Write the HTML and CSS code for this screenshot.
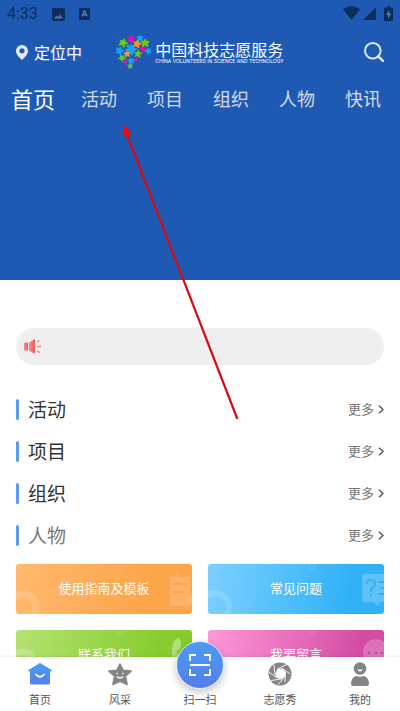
FILE: index.html
```html
<!DOCTYPE html>
<html lang="zh-CN">
<head>
<meta charset="utf-8">
<meta name="viewport" content="width=device-width, initial-scale=1">
<title>中国科技志愿服务</title>
<link rel="stylesheet" href="styles.css">
</head>
<body>
<div class="app">
  <main class="content">
    <header class="hero">
      <div class="status">
        <span class="clock">4:33</span>
        <svg width="13" height="13" viewBox="0 0 13 13"><rect width="13" height="13" rx="1.500" fill="#0f2d5a"/><path fill="#4b79bf" d="M2 10.500h9L8 6.500 6 9 4.500 7.500z"/></svg>
        <svg width="11" height="12" viewBox="0 0 11 12"><rect width="11" height="12" rx="1" fill="#0f2d5a"/><path d="M3 8.500 5.200 3h.6L8 8.500M3.800 6.800h3.400" fill="none" stroke="#5b87c8" stroke-width="1.200"/></svg>
        <span class="signals">
          <svg width="17" height="14" viewBox="0 0 17 14"><path fill="#0f2d5a" d="M0 3.500Q8.500-3 17 3.500L8.500 14z"/></svg>
          <svg width="13" height="13" viewBox="0 0 13 13"><path fill="#0f2d5a" d="M13 0v13H0z"/></svg>
          <svg class="battery" width="9" height="15" viewBox="0 0 9 15"><path fill="#0f2d5a" d="M3 0h3v1.500h2q1 0 1 1V14q0 1-1 1H1q-1 0-1-1V2.500q0-1 1-1h2z"/><path fill="#4b79bf" d="M5.200 4 2 9h2v4l3.200-5.500h-2z"/></svg>
        </span>
      </div>
      <div class="topbar">
        <button class="locate" type="button">
          <svg width="12" height="15" viewBox="0 0 12 15"><path fill="#e3ebf7" fill-rule="evenodd" d="M6 0a6 6 0 0 1 6 6c0 3.500-3.500 6.500-6 9-2.500-2.500-6-5.500-6-9a6 6 0 0 1 6-6zm0 3.200a2.600 2.600 0 1 0 0 5.200 2.600 2.600 0 0 0 0-5.200z"/></svg>
          定位中
        </button>
        <a class="brand" href="#">
          <svg width="36" height="35" viewBox="0 0 36 35">
            <defs><path id="bird" d="M-4.500-2Q-2-1.800-1.500-2.500L0-5Q1.500-3 2-2L5-2.200Q4 0 2.300 1.200L3.500 4.200Q0 3.500-.8 2.500L-4 4.200Q-3.200 1.500-2.500.7z"/></defs>
            <g fill="#f409a5"><use href="#bird" transform="translate(15 4) scale(.9)"/><use href="#bird" transform="translate(27 14) rotate(50) scale(.75)"/><use href="#bird" transform="translate(9 27) rotate(10) scale(.6)"/><use href="#bird" transform="translate(20 25) rotate(80) scale(.5)"/></g>
            <g fill="#72c51b"><use href="#bird" transform="translate(7 8) rotate(20)"/><use href="#bird" transform="translate(29 8) rotate(70)"/><use href="#bird" transform="translate(22 19) rotate(5) scale(.85)"/><use href="#bird" transform="translate(6 23) rotate(35) scale(.8)"/><use href="#bird" transform="translate(14 31) rotate(60) scale(.65)"/></g>
            <g fill="#14a4f6"><use href="#bird" transform="translate(24 3) rotate(60) scale(.75)"/><path d="M8.500 14.500Q13.500 13.500 15.500 8.500 17 13 22 14 17.500 16 16.500 21 13.500 17 8.500 14.500z"/><circle cx="12" cy="11" r="1.600"/><use href="#bird" transform="translate(3.500 16) rotate(15) scale(.95)"/><use href="#bird" transform="translate(32.500 16) rotate(45) scale(.75)"/><use href="#bird" transform="translate(15 26) rotate(60) scale(.8)"/></g>
            <g fill="#f7942b"><use href="#bird" transform="translate(21 9) rotate(10) scale(.95)"/><use href="#bird" transform="translate(11 19) rotate(60) scale(.75)"/></g>
          </svg>
          <span class="brand-text"><span class="brand-cn">中国科技志愿服务</span><span class="brand-en">CHINA VOLUNTEERS IN SCIENCE AND TECHNOLOGY</span></span>
        </a>
        <button class="search" type="button" aria-label="搜索">
          <svg width="20" height="20" viewBox="0 0 20 20" fill="none" stroke="#dfe8f5" stroke-width="2"><circle cx="8.800" cy="8.800" r="7.800"/><path d="m14.300 14.300 4.700 4.500" stroke-width="2.400" stroke-linecap="round"/></svg>
        </button>
      </div>
      <nav class="tabs">
        <a class="tab active" href="#">首页</a>
        <a class="tab" href="#">活动</a>
        <a class="tab" href="#">项目</a>
        <a class="tab" href="#">组织</a>
        <a class="tab" href="#">人物</a>
        <a class="tab" href="#">快讯</a>
      </nav>
    </header>

    <div class="notice">
      <svg width="18" height="15" viewBox="0 0 18 15"><defs><linearGradient id="horn"><stop stop-color="#fa8e8c"/><stop offset="1" stop-color="#f8585b"/></linearGradient></defs><path fill="url(#horn)" d="M1 3.500h3v8H1q-1 0-1-1v-6q0-1 1-1z"/><path fill="url(#horn)" d="M5 3.500 10 .5q1-.5 1 .5v13q0 1-1 .5l-5-3z"/><path d="m13 3 2.500-1.500M13.500 7.500H17M13 12l2.800 1.500" stroke="#ee7779" stroke-width="1.300"/></svg>
    </div>

    <section class="sections">
      <div class="section-row"><h2>活动</h2><a class="more" href="#">更多<svg width="6" height="9" viewBox="0 0 6 9"><path d="m1 .8 4 3.700-4 3.700"/></svg></a></div>
      <div class="section-row"><h2>项目</h2><a class="more" href="#">更多<svg width="6" height="9" viewBox="0 0 6 9"><path d="m1 .8 4 3.700-4 3.700"/></svg></a></div>
      <div class="section-row"><h2>组织</h2><a class="more" href="#">更多<svg width="6" height="9" viewBox="0 0 6 9"><path d="m1 .8 4 3.700-4 3.700"/></svg></a></div>
      <div class="section-row muted"><h2>人物</h2><a class="more" href="#">更多<svg width="6" height="9" viewBox="0 0 6 9"><path d="m1 .8 4 3.700-4 3.700"/></svg></a></div>
    </section>

    <div class="cards">
      <a class="card orange" href="#">
        <svg class="art" viewBox="0 0 176 50" preserveAspectRatio="none"><g fill="none" stroke="#fff" opacity=".14"><circle cx="7" cy="43" r="13" stroke-width="7"/><circle cx="104" cy="2" r="3"/></g><path d="M154 13h5l2-4 2 4h11v21l-5 8h-15z" fill="#fff" opacity=".16"/><path d="M157 20h14M157 28h10" stroke="#f8943c" stroke-width="2" opacity=".45"/><path d="m176 29-6 11v4l6-4z" fill="#fff" opacity=".18"/></svg>
        <span>使用指南及模板</span></a>
      <a class="card blue" href="#">
        <svg class="art" viewBox="0 0 176 50" preserveAspectRatio="none"><g fill="none" stroke="#fff" opacity=".14"><circle cx="7" cy="43" r="14" stroke-width="6"/><circle cx="104" cy="2" r="3"/></g><path d="M156 10h20v28h-4l-3 4-3-4h-10q-2 0-2-2V12q0-2 2-2z" fill="#fff" opacity=".22"/><path d="M159 20q0-4 4-4t4 4q0 3-4 5v3m0 2v2M171 18h5m-4 6h4m-5 6h5" fill="none" stroke="#219cf0" stroke-width="2" opacity=".55"/></svg>
        <span>常见问题</span></a>
      <a class="card green" href="#">
        <svg class="art" viewBox="0 0 176 50" preserveAspectRatio="none"><g fill="none" stroke="#fff" opacity=".18"><circle cx="7" cy="33" r="11" stroke-width="7"/><circle cx="104" cy="2" r="3"/></g><path d="M162 8q3 0 3 6t-4 7q0 7 7 13l-3 4q-10-7-9-19 1-10 6-11z" fill="#fff" opacity=".35"/></svg>
        <span>联系我们</span></a>
      <a class="card pink" href="#">
        <svg class="art" viewBox="0 0 176 50" preserveAspectRatio="none"><g fill="none" stroke="#fff" opacity=".18"><circle cx="7" cy="38" r="12" stroke-width="6"/><circle cx="104" cy="2" r="3"/></g><circle cx="168" cy="22" r="13" fill="#fff" opacity=".22"/><g fill="#b83794" opacity=".6"><circle cx="161" cy="23" r="1.500"/><circle cx="168" cy="23" r="1.500"/><circle cx="174" cy="23" r="1.500"/></g></svg>
        <span>我要留言</span></a>
    </div>
    <svg class="pointer" width="116" height="296" viewBox="0 0 116 296"><path d="M114 293 5 12" stroke="#d90b12" stroke-width="2.200" stroke-linecap="round"/><path d="M1 0 9 9 1 12z" fill="#fb0506"/></svg>
  </main>

  <nav class="bottom-nav">
    <a class="item" href="#">
      <svg width="24" height="24" viewBox="0 0 24 24"><defs><linearGradient id="blueFill" x2="0" y2="1"><stop stop-color="#489ff3"/><stop offset="1" stop-color="#547fe8"/></linearGradient></defs><path fill="url(#blueFill)" d="M11 1.500q1-.8 2 0L23.500 8v1.500H22V21q0 1.500-1.500 1.500h-17Q2 22.500 2 21V9.500H.5V8z"/><path d="M8 12.500q4 4.500 8 0" fill="none" stroke="#fff" stroke-width="1.800" stroke-linecap="round"/></svg>
      首页</a>
    <a class="item" href="#">
      <svg width="24" height="24" viewBox="0 0 24 24"><path fill="#858585" stroke="#858585" stroke-width="1.500" stroke-linejoin="round" d="m12 2 3.200 6.300 7.800.8-5.500 5.200 1.600 8.200-7.100-3.300-7.100 3.300 1.600-8.200L1 9.100l7.800-.8z"/><path d="M8.800 14.500q3.200 3 6.400 0" fill="none" stroke="#fff" stroke-width="1.200"/><circle cx="9" cy="11.500" r=".8" fill="#fff"/><circle cx="15" cy="11.500" r=".8" fill="#fff"/></svg>
      风采</a>
    <a class="item" href="#">
      <span class="scan"><svg width="22" height="22" viewBox="0 0 22 22" fill="none" stroke="#fff" stroke-width="1.800"><path d="M1 7V1h6M15 1h6v6M1 15v6h6M15 21h6v-6M1 11h20"/></svg></span>
      扫一扫</a>
    <a class="item" href="#">
      <svg width="24" height="24" viewBox="0 0 24 24"><circle cx="12" cy="12" r="11.500" fill="#858585"/><path fill="#fff" d="m9.500 7 5-.5 3 3.500-.5 4.500-3.500 2.500-4.500-1-2-3.500z"/><path d="M9.500 7 18.500 2.500M14.500 6.500l7.500 5.500M17.500 10l-.5 10M17 14.500 10 22.500M13.500 17 3 18.500M9 16 1 10M7 12.500 6 3" stroke="#fff" stroke-width=".9"/></svg>
      志愿秀</a>
    <a class="item" href="#">
      <svg width="24" height="24" viewBox="0 0 24 24"><circle cx="12" cy="6.500" r="6.300" fill="#858585"/><path fill="#858585" d="M8.500 14q3.500 1.500 7 0 5 1 5.500 7 0 3-2 3H5q-2 0-2-3 .5-6 5.500-7z"/><path d="M9.500 7.500h5q-.5 2-2.500 2T9.500 7.500z" fill="#fff"/></svg>
      我的</a>
  </nav>
</div>
</body>
</html>
```

FILE: styles.css
```css
* { box-sizing: border-box; }

body {
  margin: 0;
  font-family: "Noto Sans CJK SC", sans-serif;
  color: #333;
  background: #fff;
}

a { color: inherit; text-decoration: none; }

button {
  padding: 0;
  border: 0;
  background: none;
  color: inherit;
  font: inherit;
}

svg { display: block; flex-shrink: 0; }

.app { display: flex; flex-direction: column; height: 100vh; }

.content {
  position: relative;
  flex: 1;
  min-height: 0;
  overflow-y: auto;
  scrollbar-width: none;
}

.hero { min-height: 280px; background: #1e5ab4; color: #fff; }

.status {
  display: flex;
  align-items: center;
  height: 28px;
  padding: 0 7px;
  gap: 14px;
  color: #0f2d5a;
}
.clock { font: 16px/28px Roboto, sans-serif; }
.signals { display: flex; align-items: center; gap: 3px; margin-left: auto; padding-bottom: 2px; }
.battery { margin-left: 5px; }

.topbar {
  display: grid;
  grid-template-columns: 1fr auto 1fr;
  align-items: center;
  height: 48px;
  padding: 0 16px;
}
.locate { display: flex; align-items: center; gap: 6px; font-size: 16px; line-height: 24px; }
.search { justify-self: end; }
.brand { display: flex; align-items: center; gap: 3px; }
.brand-text { display: flex; flex-direction: column; }
.brand-cn { font-size: 16px; line-height: 18px; }
.brand-en { font: 5px/6px Inter, sans-serif; white-space: nowrap; }

.tabs { display: flex; align-items: center; height: 44px; padding-right: 4px; }
.tab { flex: 1; text-align: center; font-size: 18px; line-height: 32px; color: #d5dce8; }
.tab.active { font-size: 22px; color: #fff; }

.notice {
  display: flex;
  align-items: center;
  height: 37px;
  margin: 48px 16px 23px;
  padding: 0 8px;
  border-radius: 19px;
  background: #efefef;
}

.sections { padding: 0 16px; }
.section-row { display: flex; align-items: center; justify-content: space-between; height: 42px; }
.section-row h2 {
  margin: 0;
  display: flex;
  align-items: center;
  gap: 9px;
  font-size: 19px;
  font-weight: 400;
  line-height: 28px;
}
.section-row h2::before {
  content: "";
  width: 3px;
  height: 21px;
  border-radius: 2px;
  background: #5c9cf5;
}
.section-row.muted h2 { color: #777; }
.more { display: flex; align-items: center; gap: 4px; font-size: 13px; line-height: 20px; color: #777; }
.more path { fill: none; stroke: #555; stroke-width: 1.4; }

.cards {
  display: grid;
  grid-template-columns: 1fr 1fr;
  gap: 16px;
  padding: 8px 16px 16px;
}
.card {
  position: relative;
  display: flex;
  align-items: center;
  justify-content: center;
  height: 50px;
  padding-bottom: 2px;
  border-radius: 3px;
  overflow: hidden;
  color: #fff;
  font-size: 13px;
  line-height: 20px;
}
.card span { position: relative; }
.art { position: absolute; inset: 0; width: 100%; height: 100%; }
.orange { background: linear-gradient(100deg, #ffb96e, #fda54a 75%); }
.blue { background: linear-gradient(100deg, #7dd0ff, #30b1f6 80%); }
.green { background: linear-gradient(100deg, #b5e273, #86cc2e 80%); }
.pink { background: linear-gradient(100deg, #ff98d7, #d24ca2 85%); }

.pointer { position: absolute; left: 123px; top: 125px; pointer-events: none; }

.bottom-nav {
  position: relative;
  display: flex;
  height: 54px;
  background: #fff;
  box-shadow: 0 -1px 2px rgba(0, 0, 0, .08);
}
.item {
  flex: 1;
  display: flex;
  flex-direction: column;
  align-items: center;
  justify-content: flex-end;
  gap: 5px;
  padding-bottom: 4px;
  font-size: 11px;
  line-height: 16px;
  color: #555;
}
.scan {
  display: flex;
  flex-shrink: 0;
  align-items: center;
  justify-content: center;
  width: 48px;
  height: 48px;
  margin-bottom: -3px;
  border: 1px solid #dbe8fc;
  border-radius: 50%;
  background: linear-gradient(#4d9bf3, #547fe8);
  box-shadow: 0 3px 8px rgba(0, 0, 0, .25);
}
```
